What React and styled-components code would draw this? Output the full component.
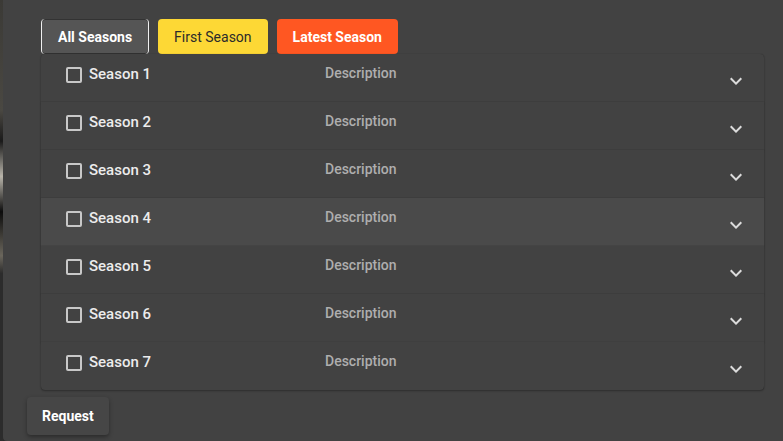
import React, { useState } from "react";
import styled, { createGlobalStyle } from "styled-components";

const GlobalStyle = createGlobalStyle`
  html, body {
    margin: 0;
    padding: 0;
    background: #2a2a2a;
    font-family: Roboto, "Liberation Sans", sans-serif;
  }
`;

const Page = styled.div`
  width: 783px;
  height: 441px;
  display: flex;
  overflow: hidden;
`;

const BackdropStrip = styled.div`
  width: 3px;
  flex-shrink: 0;
  background: linear-gradient(
    to bottom,
    #3b3a36 0%,
    #4a4842 25%,
    #1a1a1a 32%,
    #b8b4aa 40%,
    #0c0c0c 48%,
    #6a665c 58%,
    #2c2c2c 62%,
    #2c2c2c 100%
  );
`;

const Dialog = styled.div`
  flex: 1;
  background: #424242;
  border-bottom-left-radius: 4px;
  padding: 19px 19px 0 24px;
  display: flex;
  flex-direction: column;
`;

const Toolbar = styled.div`
  display: flex;
  gap: 9px;
  padding-left: 14px;
`;

const FilterButton = styled.button`
  height: 35px;
  padding: 0 16px;
  border: none;
  border-left: ${(p) => (p.active ? "1px solid #f0f0f0" : "none")};
  border-right: ${(p) => (p.active ? "1px solid #f0f0f0" : "none")};
  box-shadow: ${(p) => (p.active ? "inset 0 1px 0 #333, inset 0 -1px 0 #333" : "none")};
  border-radius: 4px;
  background: ${(p) => p.bg};
  color: ${(p) => p.fg};
  font-family: Roboto, "Liberation Sans", sans-serif;
  font-size: 14px;
  font-weight: ${(p) => (p.bold ? 700 : 400)};
  cursor: pointer;
`;

const List = styled.div`
  display: flex;
  flex-direction: column;
  padding-left: 14px;
`;

const Row = styled.div`
  height: 48px;
  box-sizing: border-box;
  display: flex;
  align-items: flex-start;
  padding: 10px 16px 0 25px;
  background: ${(p) => (p.hover ? "#4a4a4a" : "#424242")};
  box-shadow: 0 1px 2px rgba(0, 0, 0, 0.3), 0 0 1px rgba(0, 0, 0, 0.25);
  border-radius: ${(p) =>
    p.first ? "4px 4px 0 0" : p.last ? "0 0 4px 4px" : "0"};
  position: relative;
`;

const Check = styled.span`
  width: 16px;
  height: 16px;
  box-sizing: border-box;
  border: 2px solid #c8c8c8;
  border-radius: 2px;
  margin-top: 3px;
  flex-shrink: 0;
`;

const Label = styled.span`
  margin-left: 7px;
  width: 236px;
  font-size: 15px;
  font-weight: 500;
  line-height: 20px;
  color: #ececec;
`;

const Description = styled.span`
  flex: 1;
  margin-top: -1px;
  font-size: 14px;
  font-weight: 500;
  line-height: 20px;
  color: #aeaeae;
`;

const Chevron = styled.svg`
  width: 24px;
  height: 24px;
  margin-top: 5px;
  flex-shrink: 0;
`;

const Footer = styled.div`
  padding-top: 7px;
`;

const RequestButton = styled.button`
  height: 38px;
  padding: 0 15px;
  border: none;
  border-radius: 4px;
  background: #464646;
  color: #ffffff;
  font-family: Roboto, "Liberation Sans", sans-serif;
  font-size: 14px;
  font-weight: 700;
  box-shadow: 0 2px 4px rgba(0, 0, 0, 0.35);
`;

const seasons = [1, 2, 3, 4, 5, 6, 7];

const App = () => {
  const [hovered] = useState(4);
  return (
    <>
      <GlobalStyle />
      <Page>
        <BackdropStrip />
        <Dialog>
          <Toolbar>
            <FilterButton active bold bg="#555555" fg="#ffffff">
              All Seasons
            </FilterButton>
            <FilterButton bg="#fdd835" fg="#2b2b2b">
              First Season
            </FilterButton>
            <FilterButton bold bg="#ff5722" fg="#ffffff">
              Latest Season
            </FilterButton>
          </Toolbar>
          <List>
            {seasons.map((n, idx) => (
              <Row
                key={n}
                hover={hovered === n}
                first={idx === 0}
                last={idx === seasons.length - 1}
              >
                <Check />
                <Label>Season {n}</Label>
                <Description>Description</Description>
                <Chevron viewBox="0 0 24 24">
                  <path
                    d="M16.59 8.59 12 13.17 7.41 8.59 6 10l6 6 6-6z"
                    fill="#dcdcdc"
                  />
                </Chevron>
              </Row>
            ))}
          </List>
          <Footer>
            <RequestButton>Request</RequestButton>
          </Footer>
        </Dialog>
      </Page>
    </>
  );
};

export default App;
